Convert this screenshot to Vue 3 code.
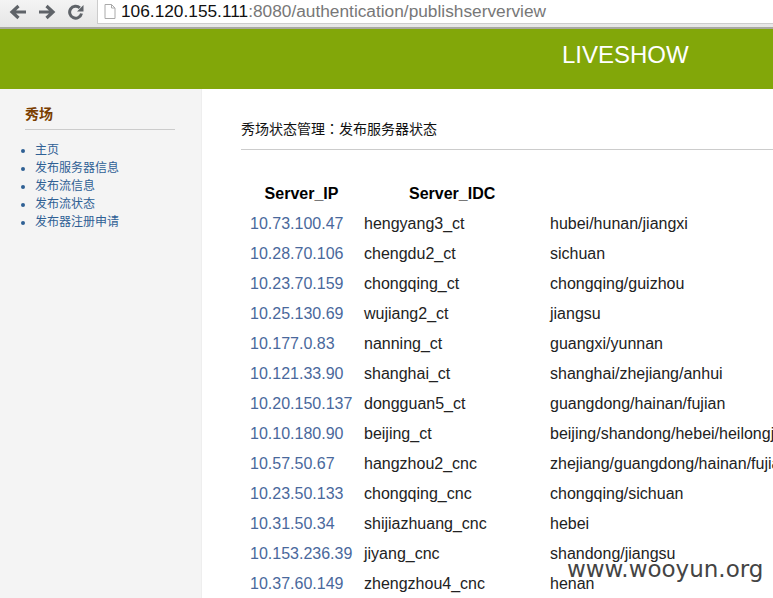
<script setup>
const servers = [
  ['10.73.100.47', 'hengyang3_ct', 'hubei/hunan/jiangxi'],
  ['10.28.70.106', 'chengdu2_ct', 'sichuan'],
  ['10.23.70.159', 'chongqing_ct', 'chongqing/guizhou'],
  ['10.25.130.69', 'wujiang2_ct', 'jiangsu'],
  ['10.177.0.83', 'nanning_ct', 'guangxi/yunnan'],
  ['10.121.33.90', 'shanghai_ct', 'shanghai/zhejiang/anhui'],
  ['10.20.150.137', 'dongguan5_ct', 'guangdong/hainan/fujian'],
  ['10.10.180.90', 'beijing_ct', 'beijing/shandong/hebei/heilongjiang'],
  ['10.57.50.67', 'hangzhou2_cnc', 'zhejiang/guangdong/hainan/fujian'],
  ['10.23.50.133', 'chongqing_cnc', 'chongqing/sichuan'],
  ['10.31.50.34', 'shijiazhuang_cnc', 'hebei'],
  ['10.153.236.39', 'jiyang_cnc', 'shandong/jiangsu'],
  ['10.37.60.149', 'zhengzhou4_cnc', 'henan']
]
const links = ['主页', '发布服务器信息', '发布流信息', '发布流状态', '发布器注册申请']
</script>

<template>
  <div class="page">
    <div class="toolbar">
      <svg class="nav" width="18" height="16" viewBox="0 0 18 16"><path d="M17 8H4M9.5 2 3 8l6.500 6" fill="none" stroke="#5f6368" stroke-width="3.200"/></svg>
      <svg class="nav" width="18" height="16" viewBox="0 0 18 16"><path d="M1 8h13M8.500 2 15 8l-6.500 6" fill="none" stroke="#5f6368" stroke-width="3.200"/></svg>
      <svg class="nav" width="18" height="16" viewBox="0 0 18 16"><path d="M14.500 9.500A6 6 0 1 1 12.800 3.800" fill="none" stroke="#5f6368" stroke-width="3"/><path d="M10 7.500h6.500V1z" fill="#5f6368"/></svg>
      <div class="omnibox">
        <svg width="12" height="15" viewBox="0 0 12 15"><path d="M1 .5h6.500L11 4v10.500H1z M7.500.5V4H11" fill="#fff" stroke="#aaa"/></svg>
        <span class="url"><span class="host">106.120.155.111</span>:8080/authentication/publishserverview</span>
      </div>
    </div>
    <header class="banner"><span class="brand">LIVESHOW</span></header>
    <div class="body">
      <aside class="side">
        <h3 class="side-title">秀场</h3>
        <ul class="menu">
          <li v-for="l in links" :key="l">{{ l }}</li>
        </ul>
      </aside>
      <main class="main">
        <h2 class="heading">秀场状态管理<span class="colon">：</span>发布服务器状态</h2>
        <table class="grid">
          <thead>
            <tr><th class="c1">Server_IP</th><th class="c2">Server_IDC</th><th class="c3"></th></tr>
          </thead>
          <tbody>
            <tr v-for="s in servers" :key="s[0]">
              <td class="ip">{{ s[0] }}</td><td>{{ s[1] }}</td><td>{{ s[2] }}</td>
            </tr>
          </tbody>
        </table>
      </main>
    </div>
    <div class="mark">www.wooyun.org</div>
  </div>
</template>

<style>
html, body { margin: 0; overflow: hidden; }
</style>

<style scoped>
.page {
  position: relative;
  width: 773px;
  height: 598px;
  overflow: hidden;
  background: #fff;
  font-family: "Liberation Sans", "Noto Sans CJK SC", sans-serif;
}
.toolbar {
  height: 27px;
  display: flex;
  align-items: center;
  gap: 11px;
  padding-left: 9px;
  background: linear-gradient(#f4f4f4, #e6e6e6);
  border-bottom: 2px solid #a8a8a0;
}
.nav { flex: none; margin-top: -4px; }
.omnibox {
  flex: 1;
  height: 23px;
  margin-top: -4px;
  margin-left: 1px;
  padding-left: 6px;
  display: flex;
  align-items: center;
  gap: 5px;
  background: #fff;
  border-left: 1px solid #ccc;
  border-bottom: 1px solid #ccc;
}
.url { font-size: 17.3px; color: #777; white-space: nowrap; }
.host { color: #111; }
.banner {
  height: 60px;
  box-sizing: border-box;
  padding: 0 0 8px 562px;
  background: #82a709;
  display: flex;
  align-items: center;
}
.brand { color: #fff; font-size: 24px; }
.body { display: flex; height: 509px; }
.side {
  width: 150px;
  flex: none;
  padding: 16px 26px 0 25px;
  background: #f4f4f4;
  border-right: 1px solid #eee;
}
.side-title {
  margin: 0;
  padding-bottom: 5px;
  font-size: 14px;
  line-height: 19px;
  font-weight: bold;
  color: #7a3e00;
  border-bottom: 1px solid #ccc;
}
.menu {
  margin: 11px 0 0;
  padding: 0 0 0 10px;
  color: #2f6094;
  font-size: 12px;
  line-height: 18px;
}
.main { flex: 1; min-width: 0; padding: 29px 0 0 39px; }
.heading {
  margin: 0;
  padding-bottom: 10px;
  font-size: 14px;
  line-height: 20px;
  font-weight: normal;
  color: #111;
  border-bottom: 1px solid #ccc;
}
.colon { font-family: "Noto Sans CJK TC", sans-serif; }
.grid {
  margin-top: 29px;
  border-collapse: collapse;
  table-layout: fixed;
  width: 540px;
  font-size: 16px;
  color: #222;
}
.grid th { height: 30px; padding: 0; text-align: center; color: #000; font-size: 16px; }
.grid td { height: 30px; padding: 0; white-space: nowrap; overflow: visible; }
.c1 { width: 123px; }
.c2 { width: 186px; }
.grid .c1 { padding-right: 2px; box-sizing: border-box; }
.grid .c2 { text-align: left; padding-left: 45px; box-sizing: border-box; }
.ip { padding-left: 9px !important; color: #49689c; }
.mark {
  position: absolute;
  left: 567px;
  top: 556px;
  font-family: "DejaVu Sans", sans-serif;
  font-size: 23px;
  color: #444;
  white-space: nowrap;
}
</style>
